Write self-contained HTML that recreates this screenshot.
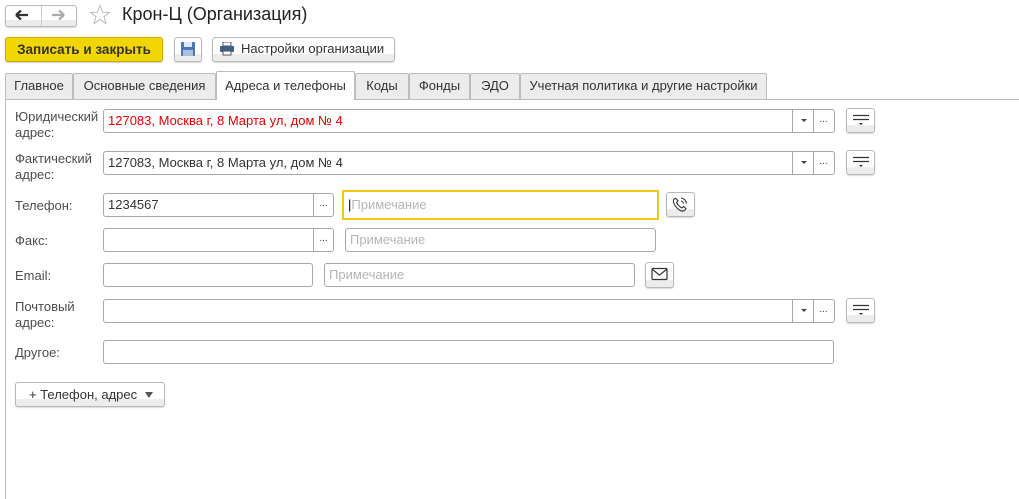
<!DOCTYPE html>
<html><head><meta charset="utf-8"><style>
*{box-sizing:border-box;margin:0;padding:0}
body{width:1019px;height:499px;background:#fff;font-family:"Liberation Sans",Arial,sans-serif;font-size:13px;color:#444;position:relative;overflow:hidden}
.a{position:absolute}
.btn{position:absolute;border:1px solid #b9b9b9;border-radius:3px;background:linear-gradient(#fff 0%,#fff 70%,#ececec 71%,#ececec 100%);box-shadow:0 1px 1px rgba(0,0,0,.15)}
.f{position:absolute;border:1px solid #a8a8a8;border-radius:3px;background:#fff;height:24px;line-height:22px;padding-left:4px;color:#333;font-size:13px;white-space:nowrap;overflow:hidden}
.sep{position:absolute;top:0;bottom:0;border-left:1px solid #a8a8a8}
.lbl{position:absolute;left:15px;color:#4d4d4d;font-size:13px;line-height:16px}
.ph{color:#b5b5b5}
.tab{position:absolute;top:73px;height:26px;border:1px solid #bcbcbc;border-bottom:none;background:#ececec;line-height:24px;text-align:center;color:#333;font-size:13px;border-radius:2px 2px 0 0}
.dots{position:absolute;top:0;width:21px;height:22px;text-align:center;line-height:20px;font-size:10px;color:#444}
.arr{position:absolute;top:9px;width:0;height:0;border-left:3px solid transparent;border-right:3px solid transparent;border-top:3px solid #444}
</style></head><body>
<div class="btn" style="left:5px;top:5px;width:72px;height:22px"></div>
<div class="a" style="left:41px;top:6px;height:20px;border-left:1px solid #ccc"></div>
<svg class="a" style="left:14px;top:9px" width="16" height="12"><path d="M2 6H14M2 6L7 1.5M2 6L7 10.5" stroke="#333" stroke-width="2.2" fill="none"/></svg>
<svg class="a" style="left:50px;top:9px" width="16" height="12"><path d="M14 6H2M14 6L9 1.5M14 6L9 10.5" stroke="#aaa" stroke-width="2.2" fill="none"/></svg>
<svg class="a" style="left:89px;top:4px" width="22" height="21"><path d="M11 1.5L13.6 8.3L20.5 8.4L15 12.7L17 19.5L11 15.4L5 19.5L7 12.7L1.5 8.4L8.4 8.3Z" stroke="#bbb" fill="#fff" stroke-width="1"/></svg>
<div class="a" style="left:122px;top:4px;font-size:18px;color:#222">Крон-Ц (Организация)</div>

<div class="a" style="left:5px;top:37px;width:158px;height:25px;background:#f2d600;border:1px solid #c9ab00;border-radius:3px;text-align:center;line-height:23px;font-weight:bold;font-size:13.5px;color:#333;box-shadow:0 1px 1px rgba(0,0,0,.2)">Записать и закрыть</div>
<div class="btn" style="left:174px;top:37px;width:28px;height:25px"></div>
<svg class="a" style="left:180px;top:41px" width="16" height="16"><rect x="1" y="1" width="14" height="14" rx="1" fill="#4a78b5"/><rect x="4" y="1" width="8" height="5" fill="#dfe8f4"/><rect x="3" y="9" width="10" height="6" fill="#a9c0de"/></svg>
<div class="btn" style="left:212px;top:37px;width:183px;height:25px"></div>
<svg class="a" style="left:219px;top:42px" width="16" height="14"><rect x="4" y="0" width="8" height="4" fill="#fff" stroke="#555"/><rect x="1" y="4" width="14" height="6" rx="1" fill="#3f5f8a"/><rect x="4" y="9" width="8" height="4" fill="#fff" stroke="#555"/></svg>
<div class="a" style="left:241px;top:41px;color:#333;font-size:13px">Настройки организации</div>

<div class="tab" style="left:5px;width:68px">Главное</div>
<div class="tab" style="left:73px;width:143px">Основные сведения</div>
<div class="tab" style="left:355px;width:54px">Коды</div>
<div class="tab" style="left:409px;width:61px">Фонды</div>
<div class="tab" style="left:470px;width:50px">ЭДО</div>
<div class="tab" style="left:520px;width:247px">Учетная политика и другие настройки</div>
<div class="a" style="left:5px;top:99px;width:1014px;border-top:1px solid #bcbcbc"></div>
<div class="a" style="left:5px;top:99px;height:400px;border-left:1px solid #bcbcbc"></div>
<div class="tab" style="left:216px;width:139px;top:71px;height:29px;background:#fff;line-height:28px">Адреса и телефоны</div>

<div class="lbl" style="top:109px">Юридический<br>адрес:</div>
<div class="f" style="left:103px;top:109px;width:732px;color:#e00000">127083, Москва г, 8 Марта ул, дом № 4<div class="sep" style="left:688px"></div><div class="arr" style="left:697px"></div><div class="sep" style="left:709px"></div><div class="dots" style="left:709px">...</div></div>
<div class="btn" style="left:846px;top:108px;width:29px;height:25px"></div>
<svg class="a" style="left:851px;top:114px" width="20" height="12"><path d="M2 1.5H18M2 5.5H18" stroke="#333" stroke-width="1.3"/><path d="M8 9H12L10 11Z" fill="#333"/></svg>

<div class="lbl" style="top:151px">Фактический<br>адрес:</div>
<div class="f" style="left:103px;top:151px;width:732px">127083, Москва г, 8 Марта ул, дом № 4<div class="sep" style="left:688px"></div><div class="arr" style="left:697px"></div><div class="sep" style="left:709px"></div><div class="dots" style="left:709px">...</div></div>
<div class="btn" style="left:846px;top:150px;width:29px;height:25px"></div>
<svg class="a" style="left:851px;top:156px" width="20" height="12"><path d="M2 1.5H18M2 5.5H18" stroke="#333" stroke-width="1.3"/><path d="M8 9H12L10 11Z" fill="#333"/></svg>

<div class="lbl" style="top:198px">Телефон:</div>
<div class="f" style="left:103px;top:193px;width:231px">1234567<div class="sep" style="left:209px"></div><div class="dots" style="left:209px">...</div></div>
<div class="a" style="left:342px;top:190px;width:317px;height:30px;border:2px solid #f5c518;background:#fff;line-height:26px;padding-left:4px;font-size:13px"><span style="color:#000">|</span><span class="ph">Примечание</span></div>
<div class="btn" style="left:666px;top:192px;width:29px;height:25px"></div>
<svg class="a" style="left:671px;top:196px" width="18" height="17"><path d="M3 3C1.5 5 3 9 6 12C9 15 12 16 14 14L15 12.5L12.5 10.5L11 12C9 11 6.5 8.5 5.5 6.5L7 5L5 2.5Z" fill="none" stroke="#333" stroke-width="1.1"/><path d="M10 5A3 3 0 0 1 12.5 7.5M10 2A6 6 0 0 1 15.5 7.5" fill="none" stroke="#333" stroke-width="1.1"/></svg>

<div class="lbl" style="top:233px">Факс:</div>
<div class="f" style="left:103px;top:228px;width:231px"><div class="sep" style="left:209px"></div><div class="dots" style="left:209px">...</div></div>
<div class="f ph" style="left:345px;top:228px;width:311px">Примечание</div>

<div class="lbl" style="top:268px">Email:</div>
<div class="f" style="left:103px;top:263px;width:210px"></div>
<div class="f ph" style="left:324px;top:263px;width:311px">Примечание</div>
<div class="btn" style="left:645px;top:262px;width:29px;height:26px"></div>
<svg class="a" style="left:651px;top:267px" width="17" height="14"><rect x="1" y="1.5" width="15" height="11" rx="1" fill="none" stroke="#333" stroke-width="1.2"/><path d="M1.5 2.5L8.5 8L15.5 2.5" fill="none" stroke="#333" stroke-width="1.2"/></svg>

<div class="lbl" style="top:299px">Почтовый<br>адрес:</div>
<div class="f" style="left:103px;top:299px;width:732px"><div class="sep" style="left:688px"></div><div class="arr" style="left:697px"></div><div class="sep" style="left:709px"></div><div class="dots" style="left:709px">...</div></div>
<div class="btn" style="left:846px;top:298px;width:29px;height:25px"></div>
<svg class="a" style="left:851px;top:304px" width="20" height="12"><path d="M2 1.5H18M2 5.5H18" stroke="#333" stroke-width="1.3"/><path d="M8 9H12L10 11Z" fill="#333"/></svg>

<div class="lbl" style="top:345px">Другое:</div>
<div class="f" style="left:103px;top:340px;width:731px"></div>

<div class="btn" style="left:15px;top:382px;width:150px;height:25px"></div>
<div class="a" style="left:29px;top:387px;color:#333;font-size:13px">+ Телефон, адрес</div>
<div class="a" style="left:145px;top:392px;border-left:4px solid transparent;border-right:4px solid transparent;border-top:6px solid #555"></div>
</body></html>
